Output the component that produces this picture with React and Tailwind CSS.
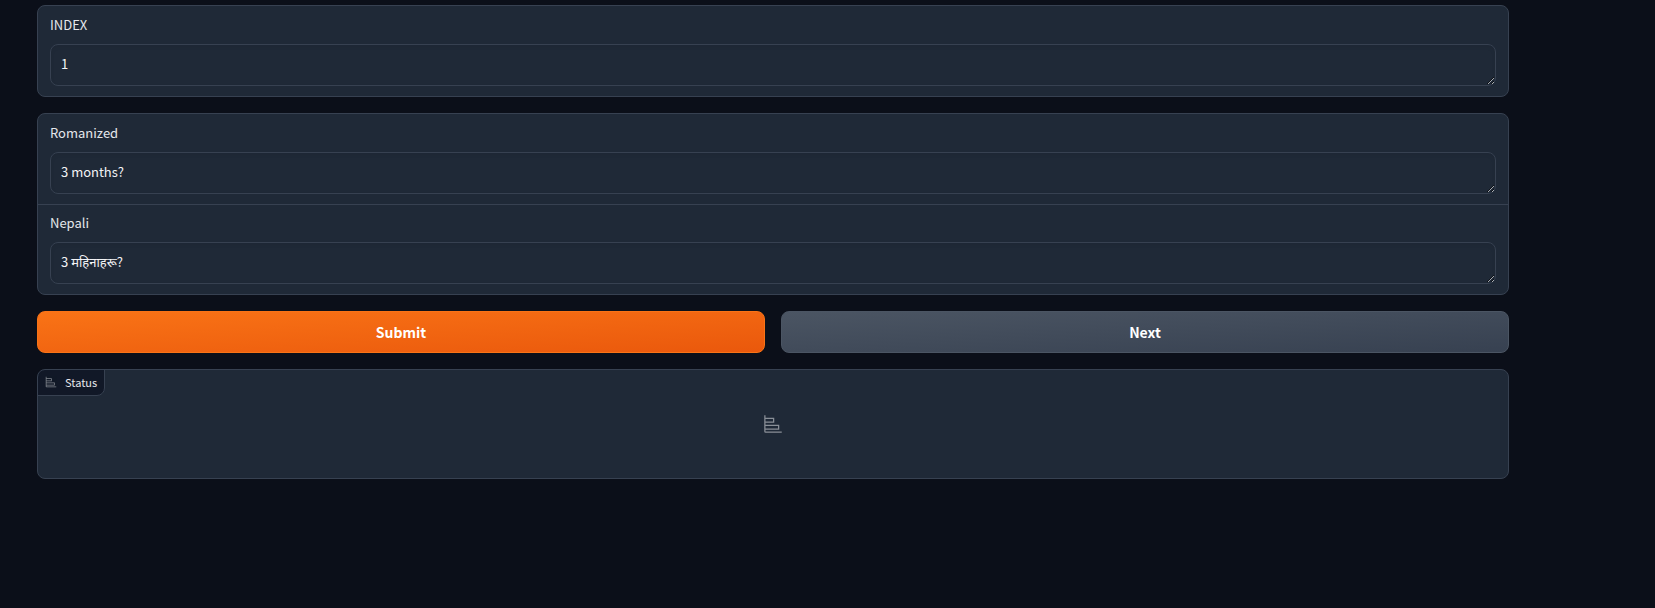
import React, { useId } from "react";

function PlotIcon({ className }) {
  return (
    <svg viewBox="0 0 32 32" className={className} fill="currentColor" aria-hidden="true">
      <path d="M4 2H2v26a2 2 0 0 0 2 2h26v-2H4v-3h22v-8H4v-3h14V6H4V2zm20 17v4H4v-4h20zM16 8v4H4V8h12z" />
    </svg>
  );
}

function Field({ label, value, className = "pt-[10px]" }) {
  const id = useId();
  return (
    <div className={`flex flex-col px-3 pb-[10px] ${className}`}>
      <label htmlFor={id} className="mb-[10px] text-[13px] leading-[18px] text-gray-200">
        {label}
      </label>
      <textarea
        id={id}
        rows={1}
        defaultValue={value}
        className="block h-[42px] w-full resize overflow-hidden rounded-lg border border-[#374151] bg-[#1f2937] px-[10px] py-[10px] text-[13px] leading-[18px] text-gray-100 shadow-[inset_0_2px_4px_0_rgba(0,0,0,0.05)] outline-none focus:border-[#4b5563]"
      />
    </div>
  );
}

const panel = "overflow-hidden rounded-lg border border-[#374151] bg-[#1f2937]";
const button = "h-[42px] flex-1 rounded-lg border text-[14px] leading-6 font-bold text-white";

export default function App() {
  return (
    <div className="min-h-screen bg-[#0b0f19] font-['Noto_Sans_CJK_SC','Noto_Sans_Devanagari','Noto_Sans',sans-serif]">
      <main className="flex flex-col gap-4 pt-[5px] pr-[146px] pb-4 pl-[37px]">
        <section className={panel}>
          <Field label="INDEX" value="1" />
        </section>
        <section className={panel}>
          <Field label="Romanized" value="3 months?" />
          <Field label="Nepali" value="3 महिनाहरू?" className="border-t border-[#374151] pt-[9px]" />
        </section>
        <div className="flex gap-4">
          <button type="button" className={`${button} border-[#f97316] bg-linear-to-br from-[#f97316] to-[#ea580c]`}>
            Submit
          </button>
          <button type="button" className={`${button} border-[#4b5563] bg-linear-to-br from-[#4b5563] to-[#374151]`}>
            Next
          </button>
        </div>
        <section className={`${panel} relative flex min-h-[110px] items-center justify-center`}>
          <h2 className="absolute -top-px -left-px flex items-center rounded-tl-lg rounded-br-lg border border-[#374151] bg-[#111827] px-[7px] pt-1 pb-[5px] text-[11px] leading-4 text-gray-200">
            <PlotIcon className="mr-2 size-3 text-gray-100 opacity-50" />
            Status
          </h2>
          <PlotIcon className="size-5 text-gray-100 opacity-50" />
        </section>
      </main>
    </div>
  );
}
